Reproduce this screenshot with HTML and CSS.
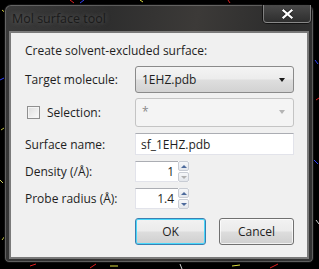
FILE: index.html
```html
<!DOCTYPE html>
<html lang="en">
<head>
    <meta charset="UTF-8">
    <title>Mol surface tool</title>
    <link rel="stylesheet" href="styles.css">
</head>
<body>
    <svg class="scene" width="319" height="269" viewBox="0 0 319 269">
        <g stroke-width="1" fill="none">
            <path d="M2 10 L7 14" stroke="#d8d040"/>
            <path d="M0 80 L4 78" stroke="#3040ff"/>
            <path d="M1 130 L4 128" stroke="#c0c040"/>
            <path d="M0 180 L3 183" stroke="#d0d060"/>
            <path d="M2 240 L5 236" stroke="#c0c040"/>
            <path d="M70 0 L74 3" stroke="#e02020"/>
            <path d="M84 0 L80 3" stroke="#3040ff"/>
            <path d="M140 0 L143 2" stroke="#e0e040"/>
            <path d="M228 0 L230 3" stroke="#e02020"/>
            <path d="M315 60 L318 64" stroke="#3040ff"/>
            <path d="M316 100 L319 98" stroke="#e02020"/>
            <path d="M314 160 L318 164" stroke="#3040ff"/>
            <path d="M316 220 L319 224" stroke="#d0d0d0"/>
            <path d="M30 266 L36 264" stroke="#e02020"/>
            <path d="M90 268 L96 264" stroke="#e02020"/>
            <path d="M110 266 L118 266" stroke="#e0e040"/>
            <path d="M180 264 L182 269" stroke="#d0d0d0"/>
            <path d="M232 266 L240 265" stroke="#e0e040"/>
            <path d="M270 268 L278 264" stroke="#e02020"/>
        </g>
    </svg>

    <div class="window">
        <div class="titlebar">
            <span class="title">Mol surface tool</span>
            <div class="close">
                <svg width="11" height="10" viewBox="0 0 11 10">
                    <path d="M1.5 1.5 L9.5 8.5 M9.5 1.5 L1.5 8.5" stroke="#222" stroke-width="4" stroke-linecap="square"/>
                    <path d="M1.5 1.5 L9.5 8.5 M9.5 1.5 L1.5 8.5" stroke="#fff" stroke-width="2.2" stroke-linecap="square"/>
                </svg>
            </div>
        </div>

        <div class="client">
            <div class="heading">Create solvent-excluded surface:</div>

            <div class="row row-combo">
                <label class="label">Target molecule:</label>
                <div class="combo">
                    <span>1EHZ.pdb</span>
                    <span class="arrow"></span>
                </div>
            </div>

            <div class="row row-combo2">
                <label class="label check-label">
                    <span class="checkbox"></span>
                    Selection:
                </label>
                <div class="combo disabled">
                    <span>*</span>
                    <span class="arrow"></span>
                </div>
            </div>

            <div class="row row-input">
                <label class="label">Surface name:</label>
                <div class="textbox">sf_1EHZ.pdb</div>
            </div>

            <div class="row row-spin">
                <label class="label">Density (/&Aring;):</label>
                <div class="spin">
                    <div class="spin-value">1</div>
                    <div class="spin-buttons">
                        <span class="spin-up"></span>
                        <span class="spin-down off"></span>
                    </div>
                </div>
            </div>

            <div class="row row-spin2">
                <label class="label">Probe radius (&Aring;):</label>
                <div class="spin">
                    <div class="spin-value">1.4</div>
                    <div class="spin-buttons">
                        <span class="spin-up"></span>
                        <span class="spin-down"></span>
                    </div>
                </div>
            </div>

            <div class="buttons">
                <button class="btn default">OK</button>
                <button class="btn">Cancel</button>
            </div>
        </div>
    </div>
</body>
</html>
```

FILE: styles.css
```css
body {
    margin: 0;
    width: 319px;
    height: 269px;
    overflow: hidden;
    background-color: #000;
    font-family: "Open Sans", "Noto Sans", sans-serif;
    font-size: 12px;
    color: #1e1e1e;
}
.scene {
    position: absolute;
    left: 0;
    top: 0;
}
.window {
    position: relative;
    margin: 4px 0 0 4px;
    width: 310px;
    height: 259px;
    box-sizing: border-box;
    padding: 0 5px 4px 5px;
    border: 1px solid #101010;
    border-radius: 7px 7px 5px 5px;
    background: linear-gradient(100deg, #3a3a3a 0%, #2e2e2e 30%, #3c3a38 55%, #2c2c2c 80%, #343434 100%);
    box-shadow: inset 0 0 0 1px rgba(255,255,255,0.22);
}
.titlebar {
    height: 27px;
    display: flex;
    justify-content: space-between;
    align-items: flex-start;
}
.title {
    margin: 5px 0 0 2px;
    color: #1a1a1a;
    font-size: 12.5px;
    text-shadow: 0 0 5px rgba(200,200,200,0.35);
}
.close {
    width: 48px;
    height: 18px;
    margin-right: -3px;
    box-sizing: border-box;
    display: flex;
    justify-content: center;
    align-items: center;
    border: 1px solid rgba(255,255,255,0.35);
    border-top: none;
    border-radius: 0 0 4px 4px;
    background: linear-gradient(#4a4a4a, #2e2e2e);
    box-shadow: 0 0 0 1px rgba(0,0,0,0.6);
}
.client {
    height: 226px;
    box-sizing: border-box;
    padding: 0 13px 0 14px;
    background-color: #f0f0f0;
    border: 1px solid #7a7a7a;
    box-shadow: 0 0 0 1px rgba(255,255,255,0.35);
}
.heading {
    height: 33px;
    display: flex;
    align-items: center;
    padding-top: 1px;
    box-sizing: border-box;
}
.row {
    display: grid;
    grid-template-columns: 110px 159px;
    align-items: center;
}
.row-combo { height: 27px; }
.row-combo2 { height: 29px; margin-top: 5px; }
.row-input { height: 22px; margin-top: 6px; }
.row-spin { height: 21px; margin-top: 6px; }
.row-spin2 { height: 21px; margin-top: 6px; }
.label {
    white-space: nowrap;
}
.check-label {
    display: flex;
    align-items: center;
    gap: 7px;
    padding-left: 2px;
}
.checkbox {
    width: 11px;
    height: 11px;
    border: 1px solid #8f8f8f;
    background: linear-gradient(135deg, #dcdcdc, #fbfbfb);
    box-shadow: inset 0 0 0 1px #f4f4f4;
}
.combo {
    height: 100%;
    box-sizing: border-box;
    display: flex;
    justify-content: space-between;
    align-items: center;
    padding: 0 8px 0 6px;
    border: 1px solid #8a8a8a;
    border-radius: 3px;
    background: linear-gradient(#f4f4f4 0%, #ececec 48%, #dedede 52%, #d2d2d2 100%);
}
.arrow {
    width: 0;
    height: 0;
    border-left: 3.5px solid transparent;
    border-right: 3.5px solid transparent;
    border-top: 4px solid #1a1a1a;
}
.combo.disabled {
    border-color: #c4c4c4;
    background: #f4f4f4;
    color: #8a8a8a;
    align-items: flex-start;
    padding-top: 4px;
}
.combo.disabled .arrow {
    margin-top: 7px;
    border-top-color: #b4b4b4;
}
.textbox {
    height: 100%;
    box-sizing: border-box;
    display: flex;
    align-items: center;
    padding-left: 5px;
    background: #fff;
    border: 1px solid #e2e3ea;
    border-top-color: #abadb3;
}
.spin {
    height: 100%;
    display: flex;
}
.spin-value {
    width: 43px;
    box-sizing: border-box;
    display: flex;
    align-items: center;
    justify-content: flex-end;
    padding-right: 4px;
    background: #fff;
    border: 1px solid #e2e3ea;
    border-top-color: #abadb3;
    border-right: none;
}
.spin-buttons {
    width: 11px;
    display: flex;
    flex-direction: column;
    gap: 1px;
    background: #fff;
}
.spin-up,
.spin-down {
    flex: 1;
    display: flex;
    justify-content: center;
    align-items: center;
    border: 1px solid #c8ccd4;
    border-radius: 2px;
    background: linear-gradient(#f6f7f9, #e4e7ec);
}
.spin-up::after,
.spin-down::after {
    content: "";
    width: 0;
    height: 0;
    border-left: 3px solid transparent;
    border-right: 3px solid transparent;
}
.spin-up::after {
    border-bottom: 3px solid #4d6a9c;
}
.spin-down::after {
    border-top: 3px solid #4d6a9c;
}
.spin-down.off::after {
    border-top-color: #b0b0b0;
}
.buttons {
    display: flex;
    gap: 13px;
    margin: 9px 0 0 110px;
}
.btn {
    height: 27px;
    font-family: inherit;
    font-size: 12px;
    color: #1e1e1e;
    border: 1px solid #707070;
    border-radius: 3px;
    background: linear-gradient(#f2f2f2 0%, #ebebeb 48%, #dddddd 52%, #cfcfcf 100%);
    box-shadow: inset 0 0 0 1px rgba(255,255,255,0.7);
    padding: 0;
}
.btn.default {
    width: 71px;
    border-color: #3c7fb1;
    box-shadow: inset 0 0 0 1px #48d8fb;
}
.btn:not(.default) {
    width: 75px;
}
```
